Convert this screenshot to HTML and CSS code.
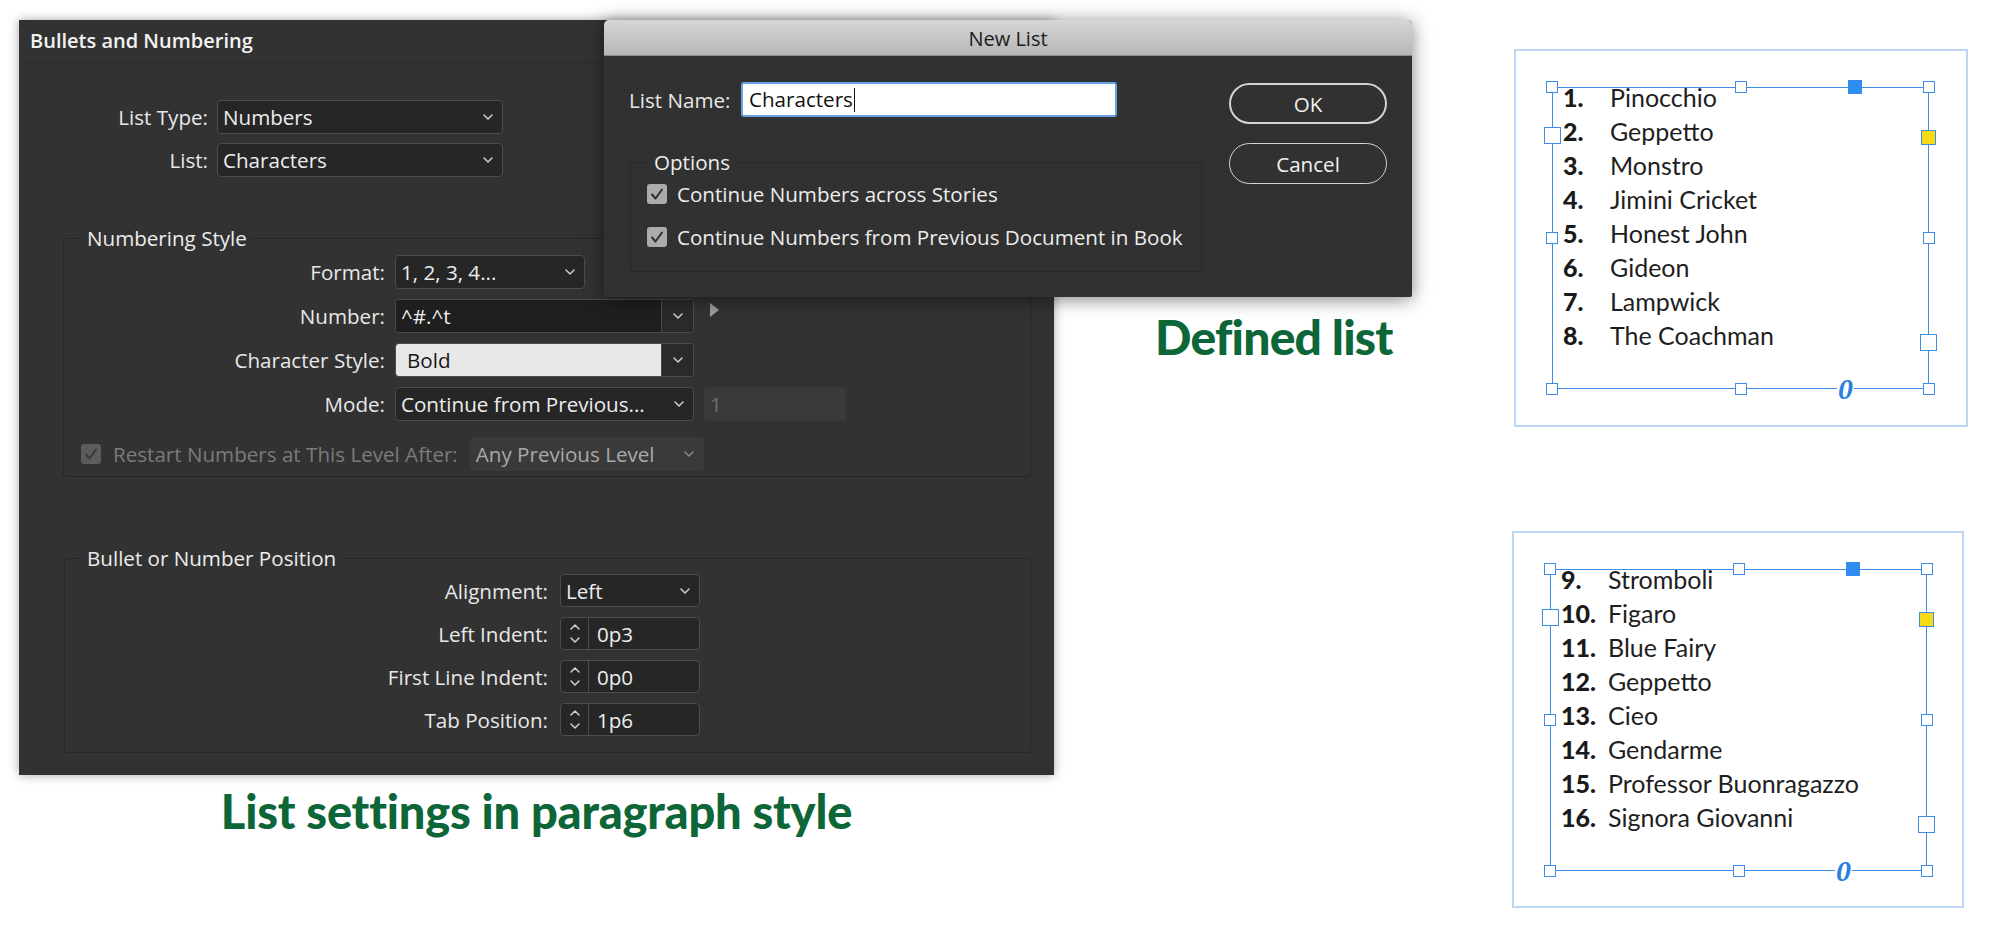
FILE: index.html
```html
<!DOCTYPE html>
<html lang="en">
<head>
<meta charset="utf-8">
<title>Bullets and Numbering</title>
<link rel="stylesheet" href="styles.css">
</head>
<body>
<div class="left">
  <section class="bn">
    <header class="bn-title">Bullets and Numbering</header>
    <div class="top-rows">
      <div class="row"><span class="lbl w-top">List Type:</span><div class="fld w-286"><span class="fld-text">Numbers</span><svg class="chev" viewBox="0 0 10 6"><path d="M1 1l4 4 4-4"/></svg></div></div>
      <div class="row"><span class="lbl w-top">List:</span><div class="fld w-286"><span class="fld-text">Characters</span><svg class="chev" viewBox="0 0 10 6"><path d="M1 1l4 4 4-4"/></svg></div></div>
    </div>
    <fieldset class="grp grp-num">
      <legend>Numbering Style</legend>
      <div class="row"><span class="lbl w-num">Format:</span><div class="fld w-190"><span class="fld-text">1, 2, 3, 4...</span><svg class="chev" viewBox="0 0 10 6"><path d="M1 1l4 4 4-4"/></svg></div></div>
      <div class="row"><span class="lbl w-num">Number:</span><div class="fld split w-299"><span class="fld-text dark">^#.^t</span><span class="drop"><svg class="chev" viewBox="0 0 10 6"><path d="M1 1l4 4 4-4"/></svg></span></div><svg class="tri" viewBox="0 0 9 14"><path d="M0 0L9 7 0 14z"/></svg></div>
      <div class="row"><span class="lbl w-num">Character Style:</span><div class="fld split w-299"><span class="fld-text light">Bold</span><span class="drop"><svg class="chev" viewBox="0 0 10 6"><path d="M1 1l4 4 4-4"/></svg></span></div></div>
      <div class="row"><span class="lbl w-num">Mode:</span><div class="fld w-299"><span class="fld-text">Continue from Previous...</span><svg class="chev" viewBox="0 0 10 6"><path d="M1 1l4 4 4-4"/></svg></div><div class="fld dis w-142"><span class="fld-text">1</span></div></div>
      <div class="row restart"><span class="cb cb-dis"><svg viewBox="0 0 20 20"><path d="M5 10.5l3.5 4 6.5-9"/></svg></span><span class="dis-txt">Restart Numbers at This Level After:</span><div class="fld dis dis-sel w-234"><span class="fld-text">Any Previous Level</span><svg class="chev" viewBox="0 0 10 6"><path d="M1 1l4 4 4-4"/></svg></div></div>
    </fieldset>
    <fieldset class="grp grp-pos">
      <legend>Bullet or Number Position</legend>
      <div class="row"><span class="lbl w-pos">Alignment:</span><div class="fld w-140"><span class="fld-text">Left</span><svg class="chev" viewBox="0 0 10 6"><path d="M1 1l4 4 4-4"/></svg></div></div>
      <div class="row"><span class="lbl w-pos">Left Indent:</span><div class="fld w-140"><span class="spin"><svg viewBox="0 0 10 6"><path d="M1 5l4-4 4 4"/></svg><svg viewBox="0 0 10 6"><path d="M1 1l4 4 4-4"/></svg></span><span class="fld-text num">0p3</span></div></div>
      <div class="row"><span class="lbl w-pos">First Line Indent:</span><div class="fld w-140"><span class="spin"><svg viewBox="0 0 10 6"><path d="M1 5l4-4 4 4"/></svg><svg viewBox="0 0 10 6"><path d="M1 1l4 4 4-4"/></svg></span><span class="fld-text num">0p0</span></div></div>
      <div class="row"><span class="lbl w-pos">Tab Position:</span><div class="fld w-140"><span class="spin"><svg viewBox="0 0 10 6"><path d="M1 5l4-4 4 4"/></svg><svg viewBox="0 0 10 6"><path d="M1 1l4 4 4-4"/></svg></span><span class="fld-text num">1p6</span></div></div>
    </fieldset>
  </section>
  <h2 class="cap cap-left">List settings in paragraph style</h2>
</div>

<div class="overlay">
  <section class="nl">
    <header class="nl-title">New List</header>
    <div class="nl-body">
      <div class="nl-main">
        <div class="nl-name"><span class="lbl">List Name:</span><div class="name-fld">Characters<span class="caret"></span></div></div>
        <fieldset class="grp grp-opt">
          <legend>Options</legend>
          <div class="opt"><span class="cb"><svg viewBox="0 0 20 20"><path d="M5 10.5l3.5 4 6.5-9"/></svg></span><span>Continue Numbers across Stories</span></div>
          <div class="opt"><span class="cb"><svg viewBox="0 0 20 20"><path d="M5 10.5l3.5 4 6.5-9"/></svg></span><span>Continue Numbers from Previous Document in Book</span></div>
        </fieldset>
      </div>
      <div class="nl-btns">
        <div class="btn btn-ok">OK</div>
        <div class="btn">Cancel</div>
      </div>
    </div>
  </section>
  <h2 class="cap cap-def">Defined list</h2>
</div>

<div class="right">
  <div class="frame">
    <div class="tf">
      <span class="h h-tl"></span><span class="h h-tm"></span><span class="h h-tr"></span>
      <span class="h h-ml"></span><span class="h h-mr"></span>
      <span class="h h-bl"></span><span class="h h-bm"></span><span class="h h-br"></span>
      <span class="port port-in"></span><span class="port port-out"></span>
      <span class="ysq"></span><span class="bsq"></span><span class="zero">0</span>
      <ol class="items">
        <li><b>1.</b><span>Pinocchio</span></li>
        <li><b>2.</b><span>Geppetto</span></li>
        <li><b>3.</b><span>Monstro</span></li>
        <li><b>4.</b><span>Jimini Cricket</span></li>
        <li><b>5.</b><span>Honest John</span></li>
        <li><b>6.</b><span>Gideon</span></li>
        <li><b>7.</b><span>Lampwick</span></li>
        <li><b>8.</b><span>The Coachman</span></li>
      </ol>
    </div>
  </div>
  <div class="frame frame2">
    <div class="tf">
      <span class="h h-tl"></span><span class="h h-tm"></span><span class="h h-tr"></span>
      <span class="h h-ml"></span><span class="h h-mr"></span>
      <span class="h h-bl"></span><span class="h h-bm"></span><span class="h h-br"></span>
      <span class="port port-in"></span><span class="port port-out"></span>
      <span class="ysq"></span><span class="bsq"></span><span class="zero">0</span>
      <ol class="items">
        <li><b>9.</b><span>Stromboli</span></li>
        <li><b>10.</b><span>Figaro</span></li>
        <li><b>11.</b><span>Blue Fairy</span></li>
        <li><b>12.</b><span>Geppetto</span></li>
        <li><b>13.</b><span>Cieo</span></li>
        <li><b>14.</b><span>Gendarme</span></li>
        <li><b>15.</b><span>Professor Buonragazzo</span></li>
        <li><b>16.</b><span>Signora Giovanni</span></li>
      </ol>
    </div>
  </div>
</div>
</body>
</html>
```

FILE: styles.css
```css
html, body { margin: 0; padding: 0; }
body {
  width: 2000px;
  height: 940px;
  background: #ffffff;
  display: flex;
  align-items: flex-start;
  position: relative;
  overflow: hidden;
  font-family: "Open Sans", "DejaVu Sans", sans-serif;
  font-size: 20.6px;
  color: #e6e6e6;
}

/* ---------- main dialog ---------- */
.left { padding: 20px 0 0 19px; display: flex; flex-direction: column; }
.bn {
  width: 1035px;
  height: 755px;
  box-sizing: border-box;
  background: #323232;
  box-shadow: 0 0 10px rgba(0,0,0,0.35);
  display: flex;
  flex-direction: column;
}
.bn-title {
  height: 42px;
  line-height: 42px;
  padding-left: 11px;
  font-size: 20px;
  font-weight: 600;
  color: #f2f2f2;
  border-bottom: 1px solid #2c2c2c;
}
.top-rows { margin-top: 37px; display: flex; flex-direction: column; gap: 9px; }
.row { display: flex; align-items: center; height: 34px; }
.lbl { text-align: right; white-space: nowrap; color: #e8e8e8; }
.w-top { width: 189px; margin-right: 9px; }
.w-num { width: 321px; margin-right: 10px; }
.w-pos { width: 483px; margin-right: 12px; }

.fld {
  height: 34px;
  box-sizing: border-box;
  border: 1px solid #4c4c4c;
  border-radius: 4px;
  background: #262626;
  display: flex;
  align-items: center;
  color: #ededed;
  overflow: hidden;
  white-space: nowrap;
}
.fld-text { padding-left: 5px; flex: 1; line-height: 32px; }
.fld-text.dark { background: #1f1f1f; align-self: stretch; }
.fld-text.light { background: #e8e8e8; color: #161616; padding-left: 11px; align-self: stretch; }
.fld-text.num { padding-left: 8px; }
.chev { width: 10px; height: 6px; margin: 0 9px 0 8px; flex: none; }
.chev path, .spin path { fill: none; stroke: #d0d0d0; stroke-width: 1.5; stroke-linecap: round; stroke-linejoin: round; }
.split .drop {
  width: 31px; flex: none; align-self: stretch;
  border-left: 1px solid #4c4c4c;
  background: #2a2a2a;
  display: flex; align-items: center; justify-content: center;
}
.split .drop .chev { margin: 0; }
.tri { width: 9px; height: 14px; margin-left: 16px; margin-top: -12px; }
.tri path { fill: #9b9b9b; }
.spin {
  width: 27px; flex: none; align-self: stretch;
  border-right: 1px solid #4c4c4c;
  display: flex; flex-direction: column; align-items: center; justify-content: center; gap: 7px;
}
.spin svg { width: 10px; height: 6px; }

.w-286 { width: 286px; }
.w-190 { width: 190px; }
.w-299 { width: 299px; }
.w-142 { width: 142px; margin-left: 10px; }
.w-234 { width: 234px; margin-left: 12px; }
.w-140 { width: 140px; }

.fld.dis { background: #3a3a3a; border-color: #3a3a3a; color: #707070; }
.fld.dis-sel { color: #a9a9a9; }
.fld.dis .chev path { stroke: #8a8a8a; }

.grp {
  margin: 0;
  padding: 0;
  border: 1px solid #262626;
  border-radius: 3px;
  min-width: 0;
}
.grp legend {
  padding: 0 5px;
  line-height: 24px;
  color: #ececec;
}
.grp-num {
  margin: 49px 0 0 44px;
  width: 968px;
  box-sizing: border-box;
  padding: 5px 0 5px 0;
  display: flex; flex-direction: column; gap: 10px;
}
.grp-num legend { margin-left: 18px; }
.grp-num .restart { margin-top: 6px; }
.grp-pos {
  margin: 69px 0 0 45px;
  width: 967px;
  box-sizing: border-box;
  padding: 4px 0 16px 0;
  display: flex; flex-direction: column; gap: 10px;
}
.grp-pos .row { height: 33px; }
.grp-pos .fld { height: 33px; }
.grp-pos legend { margin-left: 17px; }

.cb {
  width: 20px; height: 20px; flex: none;
  border-radius: 3px;
  background: #ababab;
  display: inline-flex;
}
.cb svg { width: 20px; height: 20px; }
.cb path { fill: none; stroke: #2f2f2f; stroke-width: 2; stroke-linecap: round; stroke-linejoin: round; }
.cb-dis { background: #5c5c5c; margin-left: 17px; }
.cb-dis path { stroke: #3a3a3a; }
.dis-txt { margin-left: 12px; color: #7b7b7b; white-space: nowrap; }

/* ---------- captions ---------- */
.cap {
  margin: 0;
  font-family: "Lato", "Liberation Sans", sans-serif;
  font-weight: 900;
  color: #0c6637;
  white-space: nowrap;
  line-height: 1.2;
}
.cap-left {
  font-size: 47px;
  letter-spacing: -0.2px;
  margin-top: 8px;
  align-self: center;
}
.cap-def {
  font-size: 48px;
  letter-spacing: -0.8px;
  margin: 11px 0 0 551px;
}

/* ---------- New List dialog (overlay) ---------- */
.overlay {
  position: absolute;
  left: 604px;
  top: 20px;
  display: flex;
  flex-direction: column;
}
.nl {
  width: 808px;
  height: 277px;
  background: #313131;
  border-radius: 5px 5px 2px 2px;
  box-shadow: 0 2px 18px rgba(0,0,0,0.5);
  display: flex;
  flex-direction: column;
  overflow: hidden;
}
.nl-title {
  height: 36px;
  line-height: 38px;
  font-size: 20px;
  text-align: center;
  color: #1b1b1b;
  background: linear-gradient(#d6d6d6, #b6b6b6);
  border-bottom: 1px solid #8c8c8c;
  box-sizing: border-box;
}
.nl-body { display: flex; padding: 26px 0 0 25px; }
.nl-main { width: 574px; display: flex; flex-direction: column; }
.nl-name { display: flex; align-items: center; height: 35px; }
.nl-name .lbl { width: 106px; margin-right: 6px; text-align: left; }
.name-fld {
  width: 376px; height: 35px; box-sizing: border-box;
  background: #ffffff;
  border: 2px solid #6aa4e6;
  border-radius: 3px;
  color: #111;
  padding-left: 6px;
  line-height: 31px;
  display: flex; align-items: center;
}
.caret { width: 1.5px; height: 24px; background: #111; margin-left: 1px; }
.grp-opt {
  margin: 33px 0 0 1px;
  width: 572px;
  box-sizing: border-box;
  padding: 7px 0 21px 16px;
  display: flex; flex-direction: column; gap: 17px;
  border-color: #292929;
}
.grp-opt legend { margin-left: 2px; }
.opt { display: flex; align-items: center; height: 26px; gap: 10px; white-space: nowrap; color: #ececec; }
.nl-btns { margin-left: 26px; display: flex; flex-direction: column; gap: 19px; padding-top: 1px; }
.btn {
  width: 158px; height: 41px; box-sizing: border-box;
  border: 1.5px solid #d4d4d4;
  border-radius: 21px;
  display: flex; align-items: center; justify-content: center;
  color: #f0f0f0;
}
.btn-ok { border-width: 2.5px; }

/* ---------- right side text frames ---------- */
.right {
  margin-left: auto;
  padding: 49px 32px 0 0;
  display: flex;
  flex-direction: column;
  gap: 104px;
}
.frame {
  width: 454px; height: 378px; box-sizing: border-box;
  border: 2px solid #bcd6f3;
  padding: 36px 37px 36px 36px;
  background: #ffffff;
}
.frame2 { width: 452px; height: 377px; margin-left: -2px; }
.tf {
  width: 377px; height: 302px; box-sizing: border-box;
  border: 1.5px solid #3d8de6;
  position: relative;
}
.items {
  list-style: none; margin: -8px 0 0 0; padding: 0 0 0 10px;
  font-family: "Lato", "Liberation Sans", sans-serif;
  font-size: 25px;
  line-height: 34px;
  color: #1e1e1e;
}
.items li { display: grid; grid-template-columns: 47px auto; }
.items b { font-weight: 900; color: #1a1a1a; }
.h {
  position: absolute; width: 12px; height: 12px; box-sizing: border-box;
  border: 1.5px solid #3d8de6; background: #fff;
}
.h-tl { left: -7px; top: -7px; }
.h-tm { left: 182px; top: -7px; }
.h-tr { right: -7px; top: -7px; }
.h-ml { left: -7px; top: 144px; }
.h-mr { right: -7px; top: 144px; }
.h-bl { left: -7px; bottom: -7px; }
.h-bm { left: 182px; bottom: -7px; }
.h-br { right: -7px; bottom: -7px; }
.port {
  position: absolute; width: 17px; height: 17px; box-sizing: border-box;
  border: 1.5px solid #3d8de6; background: #fff;
}
.port-in { left: -9px; top: 39px; }
.port-out { right: -9px; top: 246px; }
.ysq {
  position: absolute; right: -8px; top: 42px; width: 15px; height: 15px; box-sizing: border-box;
  border: 1.5px solid #3d8de6; background: #f7d916;
}
.bsq {
  position: absolute; left: 295px; top: -8px; width: 14px; height: 14px;
  background: #2f8cf0;
}
.zero {
  position: absolute; left: 284px; bottom: -16px;
  font-family: "Liberation Serif", serif; font-style: italic; font-weight: 700;
  font-size: 30px; line-height: 30px; color: #2a7fe3;
  background: #fff; padding: 0 1px;
}
```
